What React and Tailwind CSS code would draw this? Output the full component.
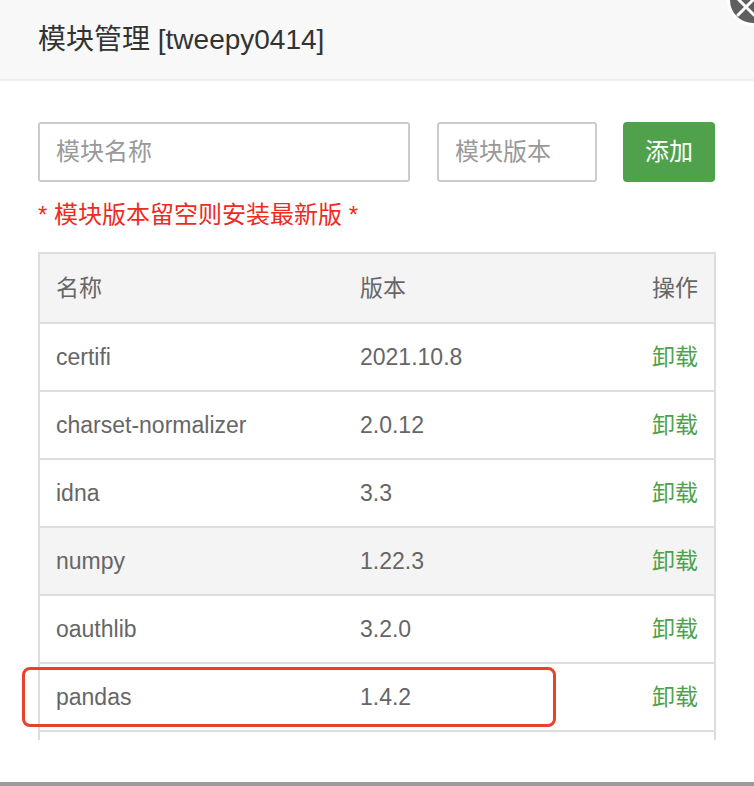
const font = { fontFamily: '"Liberation Sans", "Noto Sans CJK SC", sans-serif' };

const modules = [
  { name: "certifi", version: "2021.10.8" },
  { name: "charset-normalizer", version: "2.0.12" },
  { name: "idna", version: "3.3" },
  { name: "numpy", version: "1.22.3", hover: true },
  { name: "oauthlib", version: "3.2.0" },
  { name: "pandas", version: "1.4.2" },
];

const Row = ({ children, className = "" }) => (
  <div
    className={`flex items-center h-[68px] border-t-2 border-[#ddd] text-[23px] text-[#666] ${className}`}
  >
    {children}
  </div>
);

export default function App() {
  return (
    <div
      className="relative w-[754px] h-[786px] bg-white overflow-hidden flex flex-col"
      style={font}
    >
      {/* header */}
      <div className="h-[81px] shrink-0 bg-[#f8f8f8] border-b-2 border-[#eee] flex items-center pl-[38px] text-[28px] text-[#333]">
        模块管理 [tweepy0414]
      </div>

      {/* close button */}
      <div className="absolute left-[727px] top-[-26px] w-[52px] h-[52px] rounded-full bg-[#5f5f5f] border-[3px] border-white flex items-center justify-center">
        <svg width="28" height="28" viewBox="0 0 28 28" className="mt-[14px] mr-[14px]">
          <path d="M6 22 L22 6 M6 6 L22 22" stroke="white" strokeWidth="3" strokeLinecap="round" />
        </svg>
      </div>

      <div className="flex-1 flex flex-col pl-[38px] pt-[41px] min-h-0">
        {/* form row */}
        <div className="flex items-center">
          <input
            placeholder="模块名称"
            className="w-[372px] h-[60px] border-2 border-[#ccc] rounded-[3px] px-[16px] text-[24px] text-[#333] placeholder:text-[#999] outline-none"
            style={font}
          />
          <input
            placeholder="模块版本"
            className="ml-[27px] w-[160px] h-[60px] border-2 border-[#ccc] rounded-[3px] px-[16px] text-[24px] text-[#333] placeholder:text-[#999] outline-none"
            style={font}
          />
          <button
            className="ml-[26px] w-[92px] h-[60px] rounded-[4px] bg-[#4fa24b] text-white text-[24px]"
            style={font}
          >
            添加
          </button>
        </div>

        <p className="mt-[18px] text-[24px] leading-[30px] text-[#ee2b1f]">
          * 模块版本留空则安装最新版 *
        </p>

        {/* table */}
        <div className="mt-[22px] w-[678px] h-[488px] overflow-hidden border-x-2 border-[#ddd]">
          <div className="flex items-center h-[70px] bg-[#f4f4f4] border-t-2 border-[#ddd] text-[23px] text-[#666]">
            <span className="w-[320px] pl-[16px]">名称</span>
            <span className="flex-1">版本</span>
            <span className="pr-[16px]">操作</span>
          </div>
          {modules.map((m) => (
            <Row key={m.name} className={m.hover ? "bg-[#f4f4f4]" : "bg-white"}>
              <span className="w-[320px] pl-[16px]">{m.name}</span>
              <span className="flex-1">{m.version}</span>
              <span className="pr-[16px] text-[#4fa24b]">卸载</span>
            </Row>
          ))}
          <div className="h-[12px] border-t-2 border-[#ddd]" />
        </div>
      </div>

      {/* bottom edge */}
      <div className="h-[4px] shrink-0 bg-[#9a9a9a]" />

      {/* highlight */}
      <div className="absolute left-[22px] top-[667px] w-[534px] h-[60px] border-[3px] border-[#e8412c] rounded-[8px]" />
    </div>
  );
}
